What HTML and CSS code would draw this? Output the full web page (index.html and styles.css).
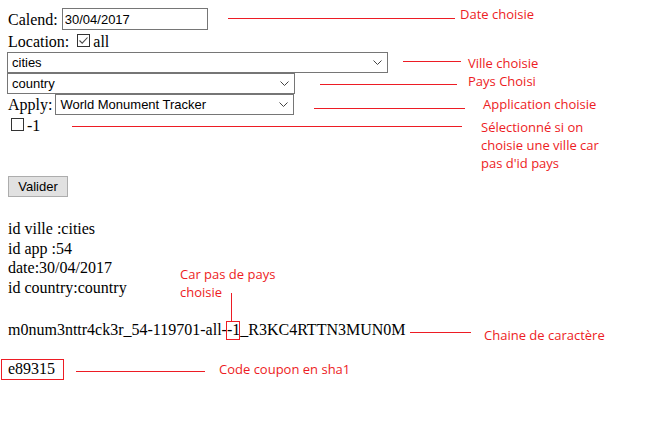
FILE: index.html
```html
<!DOCTYPE html>
<html lang="fr">
<head>
<meta charset="utf-8">
<title>Coupon</title>
<link rel="stylesheet" href="styles.css">
</head>
<body>
<div class="page">
  <form class="form">
    <div class="row row-calend"><span class="lbl">Calend:</span><input class="date" type="text" value="30/04/2017"></div>
    <div class="row row-loc"><span class="lbl">Location:</span><span class="cb cb-loc"><svg width="11" height="11" viewBox="0 0 11 11"><path d="M1.5 5.5 L4.2 8.2 L9.5 2.5" fill="none" stroke="#4a4a4a" stroke-width="1.1"/></svg></span><span>all</span></div>
    <div class="sel sel-cities"><select><option>cities</option></select><svg class="chev" width="9" height="5" viewBox="0 0 9 5"><path d="M0.5 0.5 L4.5 4.5 L8.5 0.5" fill="none" stroke="#444" stroke-width="1"/></svg></div>
    <div class="sel sel-country"><select><option>country</option></select><svg class="chev" width="9" height="5" viewBox="0 0 9 5"><path d="M0.5 0.5 L4.5 4.5 L8.5 0.5" fill="none" stroke="#444" stroke-width="1"/></svg></div>
    <div class="row row-apply"><span class="lbl">Apply:</span><div class="sel sel-app"><select><option>World Monument Tracker</option></select><svg class="chev" width="9" height="5" viewBox="0 0 9 5"><path d="M0.5 0.5 L4.5 4.5 L8.5 0.5" fill="none" stroke="#444" stroke-width="1"/></svg></div></div>
    <div class="row row-neg"><span class="cb cb-neg"></span><span>-1</span></div>
    <button class="btn" type="button">Valider</button>
  </form>
  <div class="result">
    <div>id ville :cities</div>
    <div>id app :54</div>
    <div>date:30/04/2017</div>
    <div>id country:country</div>
  </div>
  <div class="chain">m0num3nttr4ck3r_54-119701-all--1_R3KC4RTTN3MUN0M</div>
  <div class="code">e89315</div>

  <div class="notes">
    <div class="ln ln-date"></div>
    <div class="nt nt-date">Date choisie</div>
    <div class="ln ln-ville"></div>
    <div class="nt nt-ville">Ville choisie</div>
    <div class="ln ln-pays"></div>
    <div class="nt nt-pays">Pays Choisi</div>
    <div class="ln ln-app"></div>
    <div class="nt nt-app">Application choisie</div>
    <div class="ln ln-sel"></div>
    <div class="nt nt-sel">Sélectionné si on<br>choisie une ville car<br>pas d'id pays</div>
    <div class="nt nt-car">Car pas de pays<br>choisie</div>
    <div class="vln"></div>
    <div class="box box-neg"></div>
    <div class="ln ln-chain"></div>
    <div class="nt nt-chain">Chaine de caractère</div>
    <div class="box box-code"></div>
    <div class="ln ln-code"></div>
    <div class="nt nt-code">Code coupon en sha1</div>
  </div>
</div>
</body>
</html>
```

FILE: styles.css
```css
html, body {
  margin: 0;
  padding: 0;
  background: #fff;
}

.page {
  position: relative;
  width: 661px;
  height: 430px;
  box-sizing: border-box;
  padding: 8px;
  font-family: "Liberation Serif", "Times New Roman", serif;
  font-size: 16px;
  color: #000;
}

.form {
  margin: 0;
}

.row {
  white-space: nowrap;
}

.row-calend {
  height: 23px;
  line-height: 23px;
}

.date {
  box-sizing: border-box;
  width: 146px;
  height: 22px;
  margin: 0 0 0 4px;
  padding: 0 2px;
  border: 1px solid #767676;
  font-family: "Liberation Sans", Arial, sans-serif;
  font-size: 13px;
  color: #000;
  vertical-align: top;
  outline: none;
}

.row-loc {
  height: 21px;
  line-height: 21px;
}

.cb {
  display: inline-block;
  box-sizing: border-box;
  width: 13px;
  height: 13px;
  border: 1px solid #333;
  background: #fff;
  vertical-align: baseline;
  position: relative;
}

.cb svg {
  position: absolute;
  left: 0;
  top: 0;
}

.cb-loc {
  margin: 0 3px 0 8px;
}

.sel {
  position: relative;
  height: 21px;
}

.sel select {
  appearance: none;
  -webkit-appearance: none;
  box-sizing: border-box;
  width: 100%;
  height: 21px;
  margin: 0;
  padding: 0 0 0 4px;
  border: 1px solid #767676;
  border-radius: 0;
  background: #fff;
  font-family: "Liberation Sans", Arial, sans-serif;
  font-size: 13px;
  color: #000;
  outline: none;
  display: block;
}

.chev {
  position: absolute;
  right: 6px;
  top: 8px;
  pointer-events: none;
}

.sel-cities {
  width: 381px;
  margin-left: -1px;
}

.sel-country {
  width: 288px;
  margin-left: -1px;
}

.row-apply {
  height: 22px;
  line-height: 22px;
}

.sel-app {
  display: inline-block;
  width: 239px;
  margin-left: 3px;
  vertical-align: top;
}

.row-neg {
  height: 20px;
  line-height: 20px;
}

.cb-neg {
  margin: 0 3px 0 3px;
}

.btn {
  display: block;
  box-sizing: border-box;
  width: 60px;
  height: 21px;
  margin: 40px 0 0 0;
  padding: 0;
  border: 1px solid #adadad;
  border-radius: 0;
  background: #e1e1e1;
  font-family: "Liberation Sans", Arial, sans-serif;
  font-size: 13px;
  color: #000;
}

.result {
  margin-top: 22px;
  line-height: 19.7px;
}

.chain {
  margin-top: 22px;
  line-height: 20px;
  white-space: nowrap;
}

.code {
  margin-top: 19px;
  line-height: 20px;
}

/* annotation overlay */
.notes {
  position: absolute;
  left: 0;
  top: 0;
  width: 661px;
  height: 430px;
  pointer-events: none;
}

.ln {
  position: absolute;
  height: 1px;
  background: #ed1c24;
}

.vln {
  position: absolute;
  left: 231px;
  top: 293px;
  width: 1px;
  height: 28px;
  background: #ed1c24;
}

.box {
  position: absolute;
  box-sizing: border-box;
  border: 1px solid #ed1c24;
}

.box-neg {
  left: 226px;
  top: 321px;
  width: 14px;
  height: 19px;
}

.box-code {
  left: 1px;
  top: 359px;
  width: 63px;
  height: 21px;
}

.nt {
  position: absolute;
  font-family: "Open Sans", "Noto Sans", sans-serif;
  font-size: 13px;
  line-height: 18px;
  color: #ed1c24;
  white-space: nowrap;
}

.ln-date { left: 228px; top: 18px; width: 227px; }
.nt-date { left: 460px; top: 5px; }

.ln-ville { left: 403px; top: 61px; width: 58px; }
.nt-ville { left: 468px; top: 54px; }

.ln-pays { left: 320px; top: 84px; width: 137px; }
.nt-pays { left: 468px; top: 72px; }

.ln-app { left: 314px; top: 108px; width: 151px; }
.nt-app { left: 483px; top: 95px; }

.ln-sel { left: 72px; top: 126px; width: 390px; }
.nt-sel { left: 481px; top: 118px; }

.nt-car { left: 180px; top: 265px; }

.ln-chain { left: 410px; top: 332px; width: 61px; }
.nt-chain { left: 484px; top: 326px; }

.ln-code { left: 76px; top: 371px; width: 129px; }
.nt-code { left: 219px; top: 360px; }
```
